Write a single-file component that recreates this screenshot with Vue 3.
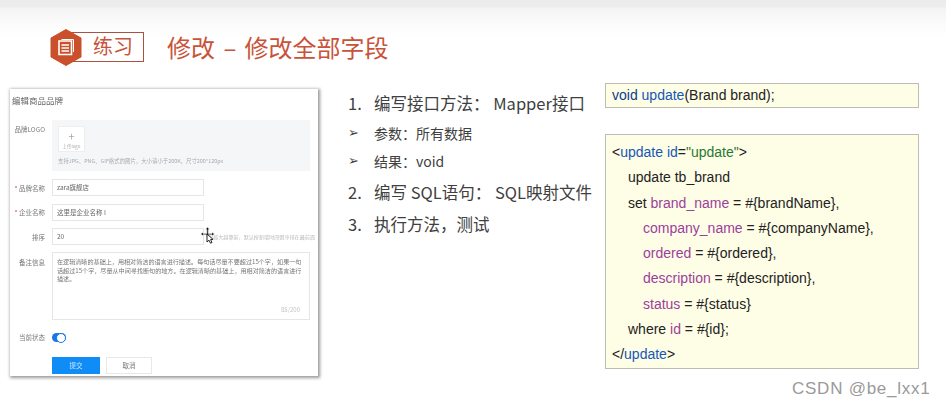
<script setup>
const lines = [
  { indent: 0, parts: [['', '<'], ['b', 'update'], ['p', ' '], ['b', 'id'], ['', '='], ['g', '"update"'], ['', '>']] },
  { indent: 1, parts: [['', 'update tb_brand']] },
  { indent: 1, parts: [['', 'set '], ['p', 'brand_name'], ['', ' = #{brandName},']] },
  { indent: 2, parts: [['p', 'company_name'], ['', ' = #{companyName},']] },
  { indent: 2, parts: [['p', 'ordered'], ['', ' = #{ordered},']] },
  { indent: 2, parts: [['p', 'description'], ['', ' = #{description},']] },
  { indent: 2, parts: [['p', 'status'], ['', ' = #{status}']] },
  { indent: 1, parts: [['', 'where '], ['p', 'id'], ['', ' = #{id};']] },
  { indent: 0, parts: [['', '</'], ['b', 'update'], ['', '>']] }
]
</script>

<template>
  <div class="page">
    <header class="head">
      <div class="badge">
        <svg class="hex" width="32" height="37" viewBox="0 0 32 37">
          <path d="M16 0.5 L31 9 V28 L16 36.5 L1 28 V9 Z" fill="#c9502a" stroke="#c9502a" stroke-linejoin="round" />
          <path d="M9 12 H21.5 V25.5 H9 Z" fill="none" stroke="#fff" stroke-width="1.6" />
          <path d="M11.5 16 H19 M11.5 19 H19 M11.5 22 H19" stroke="#fff" stroke-width="1.3" />
          <path d="M11.5 10.5 H23.5 V23" fill="none" stroke="#fff" stroke-width="1" />
        </svg>
        <div class="tag">练习</div>
      </div>
      <h1 class="title">修改 – 修改全部字段</h1>
    </header>

    <main class="body">
      <section class="card">
        <div class="card-title">编辑商品品牌</div>
        <div class="row logo-row">
          <span class="lab">品牌LOGO</span>
          <div class="logo-area">
            <div class="upload"><span class="plus">+</span><span class="up">上传logo</span></div>
            <div class="hint">支持JPG、PNG、GIF格式的图片，大小请小于200K，尺寸200*120px</div>
          </div>
        </div>
        <div class="row field"><span class="lab"><i>*</i> 品牌名称</span><div class="input">zara旗舰店</div></div>
        <div class="row field"><span class="lab"><i>*</i> 企业名称</span><div class="input">这里是企业名称 I</div></div>
        <div class="row field"><span class="lab">排序</span><div class="input">20</div><span class="tip">值越大越靠前，默认按新增时间倒序排在最前面</span></div>
        <div class="row area-row">
          <span class="lab">备注信息</span>
          <div class="area">
            在逻辑清晰的基础上，用相对简洁的语言进行描述。每句话尽量不要超过15个字，如果一句话超过15个字，尽量从中间寻找断句的地方。在逻辑清晰的基础上，用相对简洁的语言进行描述。
            <span class="count">85/200</span>
          </div>
        </div>
        <div class="row switch-row"><span class="lab">当前状态</span><div class="switch"><span></span></div></div>
        <div class="row btn-row">
          <span class="lab"></span>
          <div class="btn primary">提交</div>
          <div class="btn">取消</div>
        </div>
      </section>

      <section class="steps">
        <div class="step s1"><span class="n">1.</span><span>编写接口方法： Mapper接口</span></div>
        <div class="step sub s2"><span class="n arrow">➢</span><span>参数：所有数据</span></div>
        <div class="step sub s3"><span class="n arrow">➢</span><span>结果：void</span></div>
        <div class="step s4"><span class="n">2.</span><span>编写 SQL语句： SQL映射文件</span></div>
        <div class="step s5"><span class="n">3.</span><span>执行方法，测试</span></div>
      </section>

      <section class="code-col">
        <div class="code one"><span class="kw">void</span> <span class="fn">update</span>(Brand brand);</div>
        <div class="code many">
          <div v-for="(l, i) in lines" :key="i" class="line" :class="'ind' + l.indent">
            <span v-for="(p, j) in l.parts" :key="j" :class="p[0]">{{ p[1] }}</span>
          </div>
        </div>
      </section>
    </main>

    <svg class="cursor" width="16" height="18" viewBox="0 0 16 18">
      <path d="M7.5 1 L9.5 3.5 H8.3 V7.5 H12 V6.2 L14.5 8 L12 9.8 V8.7 H8.3 V11 H6.8 V8.7 H3 V9.8 L0.7 8 L3 6.2 V7.5 H6.8 V3.5 H5.5 Z" fill="#111" stroke="#fff" stroke-width=".5" />
      <path d="M7 8 L7 16 L9 14.2 L10.5 17.2 L12 16.5 L10.6 13.6 L13 13.4 Z" fill="#fff" stroke="#111" stroke-width=".9" />
    </svg>
    <div class="mark">CSDN @be_lxx1</div>
  </div>
</template>

<style>
html, body { margin: 0; background: #fff; }
</style>

<style scoped>
.page {
  position: relative;
  width: 946px;
  height: 407px;
  overflow: hidden;
  box-sizing: border-box;
  background: linear-gradient(#ebebeb 0, #ededed 7px, #f3f3f3 8px, #fbfbfb 24px, #fff 38px);
  font-family: "Noto Sans CJK SC", "Noto Sans", sans-serif;
  color: #333;
}
.head { display: flex; align-items: center; height: 37px; padding: 29px 0 0 50px; }
.badge { position: relative; display: flex; align-items: center; width: 95px; height: 37px; }
.hex { position: relative; z-index: 1; flex: none; }
.tag {
  position: absolute;
  left: 20px;
  top: 3px;
  width: 74px;
  height: 30px;
  box-sizing: border-box;
  border: 1px solid #a9523f;
  padding-left: 22px;
  font-size: 20px;
  line-height: 26px;
  color: #c8533a;
  background: #fff;
}
.title { margin: -3px 0 0 22px; font-size: 24px; font-weight: 400; line-height: 37px; word-spacing: 3px; color: #c8533a; white-space: nowrap; }

.body { display: flex; align-items: flex-start; padding: 23px 0 0 10px; }
.card {
  flex: none;
  width: 308px;
  height: 287px;
  box-sizing: border-box;
  padding: 5px 8px 0 2px;
  background: #fff;
  box-shadow: 1px 1px 3px 1px #9a9a9a;
  filter: blur(.6px);
  font-size: 6.5px;
  color: #777;
}
.card-title { font-size: 8.5px; line-height: 12px; color: #666; margin-bottom: 14px; }
.row { display: flex; }
.lab { flex: none; width: 33px; margin-right: 7px; text-align: right; white-space: nowrap; font-size: 6.5px; }
.lab i { color: #e33; font-style: normal; }
.logo-row { height: 51px; }
.logo-row .lab { line-height: 18px; }
.logo-area { flex: 1; padding: 6px; background: #f5f6f8; box-sizing: border-box; }
.upload {
  display: flex;
  flex-direction: column;
  align-items: center;
  width: 27px;
  height: 26px;
  box-sizing: border-box;
  background: #fff;
  border: 1px solid #eee;
  color: #aaa;
}
.plus { font-size: 11px; line-height: 15px; margin-top: 2px; }
.up { font-size: 4.4px; line-height: 5px; white-space: nowrap; }
.hint { margin-top: 5px; font-size: 5.4px; line-height: 8px; color: #aaa; white-space: nowrap; }
.field { align-items: center; height: 17px; margin-top: 7.5px; }
.logo-row + .field { margin-top: 8px; }
.input {
  flex: none;
  width: 152px;
  height: 17px;
  box-sizing: border-box;
  border: 1px solid #e6e6e6;
  padding-left: 4px;
  line-height: 15px;
  font-size: 6.5px;
  color: #666;
}
.tip { margin-left: 4px; font-size: 5.1px; color: #bbb; white-space: nowrap; }
.area-row { margin-top: 7px; }
.area-row .lab { line-height: 20px; }
.area {
  position: relative;
  flex: none;
  width: 258px;
  height: 68px;
  box-sizing: border-box;
  border: 1px solid #e6e6e6;
  padding: 5px 4px;
  font-size: 6.1px;
  line-height: 8.5px;
  color: #777;
}
.count { position: absolute; right: 9px; bottom: 5px; font-size: 6px; color: #c4c4c4; }
.switch-row { align-items: center; margin-top: 11px; height: 12px; }
.switch { position: relative; width: 14px; height: 9px; border-radius: 4.5px; background: #1677e8; }
.switch span {
  position: absolute;
  right: 0;
  top: 0;
  width: 8px;
  height: 8px;
  border: .5px solid #1677e8;
  border-radius: 50%;
  background: #fff;
}
.btn-row { margin-top: 14px; }
.btn {
  width: 46px;
  height: 17px;
  margin-right: 6px;
  box-sizing: border-box;
  border: 1px solid #e8e8e8;
  text-align: center;
  line-height: 15px;
  font-size: 6.5px;
}
.btn.primary { width: 48px; background: #0f8cf5; border-color: #0f8cf5; color: #cde6fb; }

.steps { flex: none; width: 287px; box-sizing: border-box; padding: 0 0 0 30px; height: 160px; color: #404040; }
.step { display: flex; white-space: nowrap; font-size: 16.5px; line-height: 22px; }
.step.sub { font-size: 14px; }
.n { flex: none; width: 26px; }
.arrow { font-family: "DejaVu Sans", sans-serif; font-size: 13px; }
.s1 { margin-top: 3px; }
.s2 { margin-top: 8px; }
.s3 { margin-top: 6px; }
.s4 { margin-top: 9px; }
.s5 { margin-top: 10px; }

.code-col { flex: none; width: 314px; margin-top: -6px; }
.code {
  box-sizing: border-box;
  background: #fefde6;
  border: 1px solid #bdbdb4;
  font-family: "Liberation Sans", Arial, sans-serif;
  font-size: 14px;
  color: #222;
  white-space: pre;
}
.one { height: 25px; padding-left: 6px; line-height: 23px; }
.many { height: 235px; margin-top: 26px; padding: 5px 6px 0; }
.line { height: 25.25px; line-height: 25.25px; }
.ind1 { padding-left: 16px; }
.ind2 { padding-left: 31px; }
.kw { color: #0a3d91; }
.fn, .b { color: #1557b8; }
.p { color: #9c3f9c; }
.g { color: #1f7a33; }
.cursor { position: absolute; left: 200px; top: 226px; }
.mark {
  position: absolute;
  left: 792px;
  top: 378px;
  font-family: "Liberation Sans", Arial, sans-serif;
  font-size: 17px;
  line-height: 22px;
  letter-spacing: .75px;
  color: #9a9a9a;
  white-space: nowrap;
}
</style>
